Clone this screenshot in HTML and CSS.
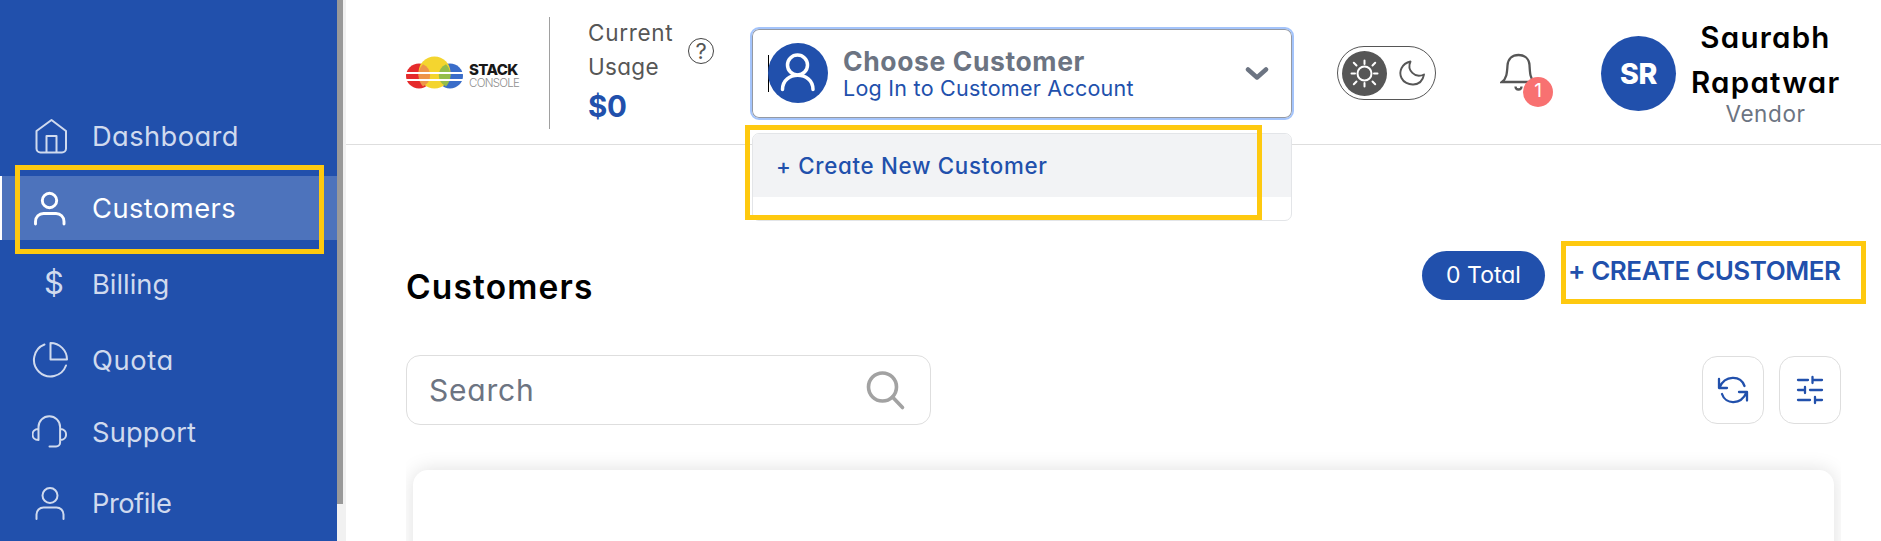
FILE: index.html
```html
<!DOCTYPE html>
<html lang="en">
<head>
<meta charset="utf-8">
<title>Customers</title>
<link rel="stylesheet" href="styles.css">
</head>
<body>
<div class="app">
  <aside class="sidebar">
    <nav class="nav">
      <a class="nav-item dashboard">
        <svg class="nav-icon" width="36" height="38" viewBox="0 0 36 38"><path d="M3.500 14 18.500 3l14.500 11V31.500a4 4 0 0 1-4 4H7.500a4 4 0 0 1-4-4zM13.500 35.500V19h10v16.500"/></svg>
        <span>Dashboard</span></a>
      <a class="nav-item active customers">
        <svg class="nav-icon" width="36" height="38" viewBox="0 0 36 38"><circle cx="16.500" cy="11.500" r="7.200"/><path d="M2.500 35v-2.500a8 8 0 0 1 8-8h12.500a8 8 0 0 1 8 8V35"/></svg>
        <span>Customers</span></a>
      <a class="nav-item billing"><span class="nav-icon dollar">$</span><span>Billing</span></a>
      <a class="nav-item quota">
        <svg class="nav-icon" width="38" height="38" viewBox="0 0 38 38"><path d="M12.500 3.500A16.500 16.500 0 1 0 34 24.500M18.500 2v16.500H35A16.500 16.500 0 0 0 18.500 2z"/></svg>
        <span>Quota</span></a>
      <a class="nav-item support">
        <svg class="nav-icon" width="38" height="36" viewBox="0 0 38 36"><path d="M6.500 26V13a10.800 10.800 0 0 1 21.600 0v15.500a4 4 0 0 1-4 4H17.500M6.500 15C-1.500 15-1.500 26 6.500 26M28.100 15c8 0 8 11 0 11"/></svg>
        <span>Support</span></a>
      <a class="nav-item profile">
        <svg class="nav-icon" width="36" height="36" viewBox="0 0 36 36"><circle cx="17" cy="10.500" r="7.500"/><path d="M3.500 34v-4.500a7 7 0 0 1 7-7h13a7 7 0 0 1 7 7V34"/></svg>
        <span>Profile</span></a>
    </nav>
    <div class="highlight highlight-nav"></div>
  </aside>
  <div class="scroll-track"><div class="scroll-thumb"></div></div>

  <div class="main">
    <header class="header">
      <div class="brand">
        <svg class="logo" width="57" height="36" viewBox="0 0 57 36">
          <ellipse cx="13" cy="21" rx="13" ry="12.500" fill="#e52b2c"/>
          <ellipse cx="44" cy="21" rx="13" ry="12.500" fill="#3a6dc9"/>
          <circle cx="28.500" cy="17.500" r="16" fill="#f4d52f"/>
          <path d="M17 9.200A13 12.500 0 0 1 17 31.500A16 16 0 0 1 17 9.200z" fill="#ee9549"/>
          <path d="M40 9.200A13 12.500 0 0 0 40 31.500A16 16 0 0 0 40 9.200z" fill="#94bd4b"/>
          <path d="M0 18h57M0 25h57" stroke="#fff" stroke-width="1.800"/>
        </svg>
        <div class="brand-text"><div class="brand-top">STACK</div><div class="brand-bottom">CONSOLE</div></div>
      </div>
      <div class="divider"></div>
      <div class="usage">
        <div class="usage-label">Current<br><span class="usage-word">Usage</span></div>
        <div class="usage-value">$0</div>
      </div>
      <div class="help">?</div>

      <div class="picker">
        <div class="select">
          <div class="caret"></div>
          <svg class="select-avatar" width="60" height="60" viewBox="0 0 60 60"><circle cx="30" cy="30" r="30" fill="#2150ac"/><g fill="none" stroke="#fff" stroke-width="3.500" stroke-linecap="round"><circle cx="29.500" cy="22" r="10"/><path d="M14.500 46.500c0-19 30.500-19 30.500 0"/></g></svg>
          <div class="select-text">
            <div class="select-title">Choose Customer</div>
            <div class="select-sub">Log In to Customer Account</div>
          </div>
          <svg class="chevron" width="24" height="16" viewBox="0 0 24 16"><path d="M3 3.500 12 11.500 21 3.500"/></svg>
        </div>
        <div class="menu"><div class="option">+ Create New Customer</div></div>
        <div class="highlight highlight-menu"></div>
      </div>

      <div class="theme">
        <svg width="45" height="45" viewBox="0 0 45 45"><circle cx="22.500" cy="22.500" r="22.500" fill="#565656"/><g fill="none" stroke="#fff" stroke-width="2" stroke-linecap="round"><circle cx="22.500" cy="22.500" r="7"/><path d="M22.500 9.500v3.500M22.500 32v3.500M9.500 22.500H13M32 22.500h3.500M11.800 11.800l2.700 2.700M30.500 30.500l2.700 2.700M33.200 11.800l-2.700 2.700M14.500 30.500l-2.700 2.700"/></g></svg>
        <svg width="28" height="28" viewBox="0 0 28 28"><path d="M12.500 2.500C3.500 4.500.500 13 3.500 19c4 8.500 20 10 22.500-3.500C17 20 8.500 11 12.500 2.500z" fill="none" stroke="#565656" stroke-width="1.900" stroke-linejoin="round"/></svg>
      </div>
      <div class="bell">
        <svg width="36" height="40" viewBox="0 0 36 40"><g fill="none" stroke="#565656" stroke-width="2.300"><path d="M2 29h32c-4-4-4-9-4.500-17C29 5.500 24.500 2 18.500 2S8 5.500 7.500 12.500C7 20.500 6.500 25.500 2 29z"/><path d="M15.500 33.500c0 4 6 4 6 0"/></g></svg>
        <span class="badge">1</span>
      </div>
      <div class="avatar">SR</div>
      <div class="user">
        <div class="user-name">Saurabh<br>Rapatwar</div>
        <div class="user-role">Vendor</div>
      </div>
    </header>

    <section class="content">
      <div class="title-row">
        <h1>Customers</h1>
        <div class="total">0 Total</div>
        <a class="create">+ CREATE CUSTOMER<span class="highlight highlight-create"></span></a>
      </div>
      <div class="tools">
        <div class="search"><span>Search</span>
          <svg width="42" height="42" viewBox="0 0 42 42" fill="none" stroke="#a2a2a2" stroke-width="3.600" stroke-linecap="round"><circle cx="18.500" cy="18" r="14"/><path d="m28.500 28 10 10.500"/></svg>
        </div>
        <div class="tool-button">
          <svg width="34" height="34" viewBox="0 0 34 34"><path d="M3 6v9h8M3.500 14.500C9 2 24.500 2 28.500 13M31 27.500V19h-8M30.500 19.500C25 32 9.500 32 6 21"/></svg>
        </div>
        <div class="tool-button">
          <svg width="34" height="34" viewBox="0 0 34 34"><path d="M5 7h10M20 7h9M19.500 4v6M5 17h7M17 17h12M12 14v6M5 27h12M22 27h7M22 24v6"/></svg>
        </div>
      </div>
      <div class="card-clip"><div class="card"></div></div>
    </section>
  </div>
</div>
</body>
</html>
```
FILE: styles.css
```css
* { box-sizing: border-box; }
body { margin: 0; background: #fff; font-family: Inter, "Open Sans", sans-serif; font-feature-settings: "cv11"; overflow: hidden; }
.app { display: flex; height: 541px; overflow: hidden; }

.sidebar { position: relative; width: 337px; background: #2150ac; }
.nav { display: flex; flex-direction: column; padding-top: 104px; }
.nav-item { display: flex; align-items: center; height: 64px; padding-left: 92px; color: #d0daee; font-size: 27.3px; position: relative; }
.nav-item.active { background: #4d73bc; color: #fff; border-left: 2px solid #fff; padding-left: 90px; }
.nav-icon { position: absolute; left: 33px; fill: none; stroke: #d0daee; stroke-width: 2; stroke-linecap: round; stroke-linejoin: round; }
.active .nav-icon { left: 31px; stroke: #fff; stroke-width: 2.9; }
.nav-icon.dollar { left: 44px; font-size: 31px; line-height: 38px; top: 12px; }
.dashboard { letter-spacing: .4px; margin-bottom: 8px; }
.customers { letter-spacing: .45px; margin-bottom: 12px; }
.billing { letter-spacing: 0; margin-bottom: 12px; }
.quota { letter-spacing: .6px; margin-bottom: 8px; }
.support { letter-spacing: .15px; margin-bottom: 7px; }
.profile { letter-spacing: -.5px; }
.quota .nav-icon { left: 32px; }
.support .nav-icon { left: 32px; }

.scroll-track { width: 9px; background: #f1f1f1; }
.scroll-thumb { width: 6px; height: 504px; background: #999; }

.main { flex: 1; display: flex; flex-direction: column; }
.header { display: flex; align-items: flex-start; height: 145px; padding-left: 60px; border-bottom: 1px solid #dedede; }
.brand { display: flex; width: 116px; height: 36px; margin-top: 55px; flex: none; }
.logo { flex: none; }
.brand-text { margin: 6px 0 0 6px; white-space: nowrap; }
.brand-top { font-size: 15px; font-weight: 800; line-height: 18px; height: 16px; letter-spacing: -.6px; color: #181818; }
.brand-bottom { font-size: 11.500px; font-weight: 300; line-height: 12px; letter-spacing: -.7px; color: #8f8f8f; }
.divider { width: 1px; height: 112px; margin: 17px 38px 0 27px; background: #a0a0a0; }
.usage { width: 100px; padding-top: 16px; }
.usage-label { font-size: 22.5px; line-height: 34px; letter-spacing: .7px; color: #565656; }
.usage-word { letter-spacing: .3px; }
.usage-value { font-size: 29.5px; line-height: 44px; font-weight: 700; letter-spacing: -.3px; color: #2150ac; }
.help { width: 26px; height: 26px; margin-top: 38px; border: 1px solid #444; border-radius: 50%; text-align: center; line-height: 25px; font-size: 22px; color: #565656; }

.picker { position: relative; width: 544px; margin: 27px 43px 0 36px; flex: none; }
.select { display: flex; align-items: center; height: 93px; padding-left: 16px; border: 2px solid #a4c4fb; border-radius: 9px; box-shadow: inset 0 0 0 1px #9499a3; }
.caret { width: 1px; height: 37px; margin-right: -1px; background: #000; }
.select-avatar { flex: none; margin-top: -2px; }
.select-text { width: 408px; padding-left: 15px; }
.select-title { font-size: 26.5px; line-height: 30px; font-weight: 700; letter-spacing: .6px; color: #6c7482; }
.select-sub { font-size: 21.5px; line-height: 25px; letter-spacing: .25px; color: #2150ac; white-space: nowrap; }
.chevron { margin-left: 9px; fill: none; stroke: #6c7482; stroke-width: 4.500; stroke-linecap: round; stroke-linejoin: round; }
.menu { position: absolute; left: 2px; top: 106px; width: 540px; height: 88px; border: 1px solid #e3e5e8; border-radius: 7px; background: #fff; overflow: hidden; }
.option { height: 63px; padding-left: 23px; line-height: 63px; background: #f2f3f5; color: #2150ac; font-size: 22.3px; font-weight: 500; letter-spacing: .7px; }

.highlight { position: absolute; border: 5px solid #fec90f; }
.highlight-nav { left: 15px; top: 165px; width: 309px; height: 89px; }
.highlight-menu { left: -5px; top: 98px; width: 517px; height: 95px; }
.highlight-create { left: -7px; top: -10px; width: 305px; height: 63px; }

.theme { display: flex; align-items: center; gap: 11px; width: 99px; height: 54px; margin-top: 46px; padding-left: 4px; border: 1px solid #565656; border-radius: 27px; }
.bell { position: relative; width: 36px; height: 40px; margin: 53px 0 0 64px; }
.badge { position: absolute; left: 23px; top: 24px; width: 30px; height: 30px; border-radius: 50%; background: #f87171; color: #fff; text-align: center; font-size: 19px; line-height: 28px; }
.avatar { width: 75px; height: 75px; margin: 36px 15px 0 65px; border-radius: 50%; background: #2150ac; color: #fff; text-align: center; line-height: 75px; font-size: 28.5px; font-weight: 800; letter-spacing: -.3px; }
.user { width: 149px; padding-top: 15px; text-align: center; white-space: nowrap; }
.user-name { font-size: 29.5px; line-height: 45px; font-weight: 600; letter-spacing: 1.25px; color: #000; }
.user-role { font-size: 22.5px; line-height: 18px; letter-spacing: .6px; color: #6c7482; }

.content { padding: 0 40px 0 60px; }
.title-row { display: flex; align-items: flex-start; padding-top: 106px; height: 210px; }
h1 { margin: 16px 0 0; flex: 1; font-size: 33.5px; line-height: 40px; font-weight: 600; letter-spacing: 1.15px; }
.total { width: 123px; height: 49px; border-radius: 25px; background: #2150ac; color: #fff; text-align: center; line-height: 49px; font-size: 23px; }
.create { position: relative; width: 273px; margin-left: 23px; line-height: 39px; font-size: 26px; font-weight: 600; letter-spacing: -.45px; white-space: nowrap; color: #2150ac; }
.tools { display: flex; align-items: center; gap: 15px; height: 70px; }
.search { display: flex; align-items: center; justify-content: space-between; width: 525px; height: 70px; margin-right: auto; padding: 0 24px 0 22px; border: 1px solid #dedede; border-radius: 14px; font-size: 30px; letter-spacing: .8px; color: #6c7482; }
.tool-button { display: flex; align-items: center; justify-content: center; width: 62px; height: 68px; border: 1px solid #dedede; border-radius: 15px; }
.tool-button svg { fill: none; stroke: #2150ac; stroke-width: 2.3; stroke-linecap: round; stroke-linejoin: round; }
.card-clip { height: 116px; padding: 45px 7px 0; overflow: hidden; }
.card { height: 200px; border-radius: 15px; background: #fff; box-shadow: 0 0 20px rgba(0, 0, 0, .13); }
```
